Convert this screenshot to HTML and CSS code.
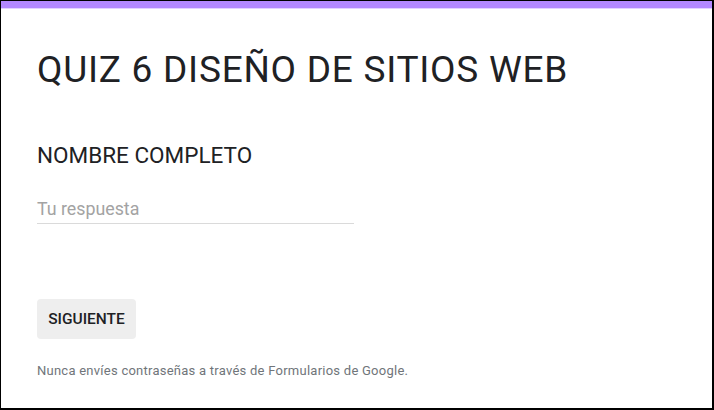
FILE: index.html
```html
<!DOCTYPE html>
<html lang="es">
<head>
<meta charset="utf-8">
<link rel="stylesheet" href="styles.css">
</head>
<body>
<div class="frame">
  <div class="accent"></div>
  <div class="content">
    <h1 class="title">QUIZ 6 DISEÑO DE SITIOS WEB</h1>
    <div class="question">NOMBRE COMPLETO</div>
    <div class="answer">Tu respuesta</div>
    <button class="next">SIGUIENTE</button>
    <p class="note">Nunca envíes contraseñas a través de Formularios de Google.</p>
  </div>
</div>
</body>
</html>
```
FILE: styles.css
```css
html, body {
  margin: 0;
  padding: 0;
  background: #fff;
}
body {
  width: 714px;
  height: 410px;
  font-family: Roboto, "Noto Sans", sans-serif;
}
.frame {
  box-sizing: border-box;
  width: 714px;
  height: 410px;
  border-top: 1px solid #000;
  border-left: 1px solid #000;
  border-right: 2px solid #000;
  border-bottom: 2px solid #000;
  overflow: hidden;
}
.accent {
  height: 7px;
  background: #b388ff;
  border-bottom: 1px solid #e3d2ff;
}
.content {
  padding: 0 0 0 36px;
  display: flex;
  flex-direction: column;
  align-items: flex-start;
}
.title {
  margin: 39px 0 0;
  font-size: 37px;
  font-weight: 400;
  line-height: 44px;
  letter-spacing: 0.75px;
  color: #202124;
  white-space: nowrap;
}
.question {
  margin-top: 49px;
  font-size: 22.5px;
  line-height: 28px;
  color: #202124;
}
.answer {
  margin-top: 28px;
  width: 317px;
  font-size: 17.8px;
  line-height: 24px;
  color: #a3a3a3;
  border-bottom: 1px solid #dadada;
  padding-bottom: 2px;
}
.next {
  margin-top: 75px;
  width: 99px;
  height: 40px;
  border: none;
  border-radius: 4px;
  background: #eeeeee;
  font-family: Roboto, sans-serif;
  font-weight: 500;
  font-size: 15.5px;
  color: #202124;
  padding: 0;
}
.note {
  margin: 24px 0 0;
  font-size: 13px;
  line-height: 16px;
  letter-spacing: 0.25px;
  color: #70757a;
}
```
